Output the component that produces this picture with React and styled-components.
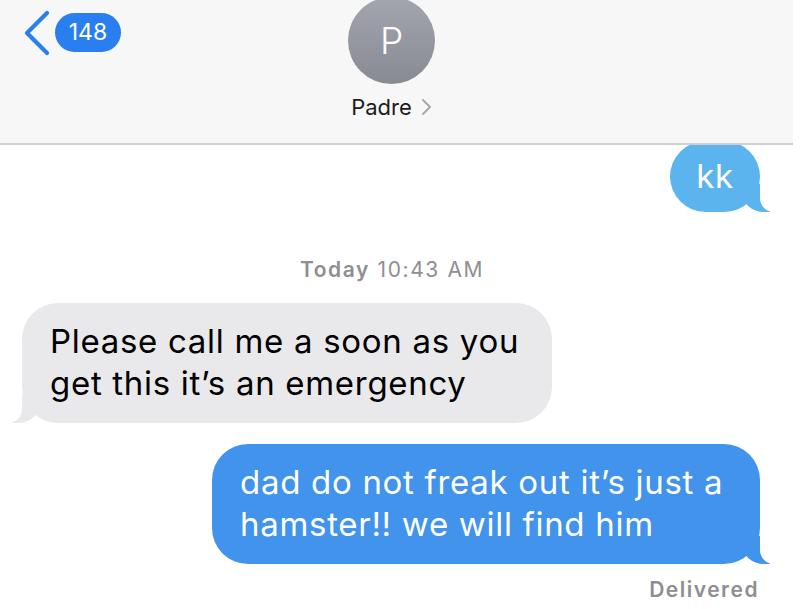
import React from "react";
import styled, { createGlobalStyle } from "styled-components";

const GlobalStyle = createGlobalStyle`
  html, body {
    margin: 0;
    padding: 0;
    background: #ffffff;
  }
  body {
    width: 800px;
    height: 609px;
    overflow: hidden;
    font-family: Inter, "Liberation Sans", Arial, sans-serif;
    -webkit-font-smoothing: antialiased;
  }
`;

const Screen = styled.div`
  width: 800px;
  height: 609px;
  display: flex;
  flex-direction: column;
  background: #ffffff;
`;

const Header = styled.header`
  position: relative;
  z-index: 2;
  width: 793px;
  height: 145px;
  box-sizing: border-box;
  background: #f7f7f7;
  border-bottom: 2px solid #cfcfcf;
  display: grid;
  grid-template-columns: 1fr auto 1fr;
`;

const Back = styled.div`
  display: flex;
  align-items: flex-start;
  gap: 4px;
  padding: 10px 0 0 23px;
`;

const Badge = styled.span`
  height: 39px;
  min-width: 66px;
  margin-top: 3px;
  box-sizing: border-box;
  padding: 0 10px;
  border-radius: 20px;
  background: #2a7ff0;
  color: #ffffff;
  font-size: 23px;
  line-height: 39px;
  text-align: center;
`;

const Contact = styled.div`
  display: flex;
  flex-direction: column;
  align-items: center;
  padding-right: 10px;
`;

const Avatar = styled.div`
  width: 87px;
  height: 87px;
  margin-top: -3px;
  border-radius: 50%;
  background: linear-gradient(180deg, #a3a6ae 0%, #878a93 100%);
  color: #ffffff;
  font-size: 37px;
  font-weight: 300;
  display: flex;
  align-items: center;
  justify-content: center;
`;

const NameRow = styled.div`
  margin-top: 10px;
  display: flex;
  align-items: center;
  gap: 9px;
  color: #1c1c1c;
  font-size: 22px;
`;

const Thread = styled.main`
  display: flex;
  flex-direction: column;
`;

const Row = styled.div`
  display: flex;
  justify-content: ${(p) => (p.$mine ? "flex-end" : "flex-start")};
  padding: ${(p) => (p.$mine ? "0 40px 0 0" : "0 0 0 22px")};
  margin-top: ${(p) => p.$top || 0}px;
`;

const Bubble = styled.div`
  position: relative;
  box-sizing: border-box;
  width: ${(p) => p.$width}px;
  padding: ${(p) => p.$pad || "17px 28px 19px"};
  border-radius: 36px;
  background: ${(p) => p.$color};
  color: ${(p) => (p.$mine ? "#ffffff" : "#000000")};
  font-size: 33px;
  letter-spacing: 0.7px;
  line-height: 42px;
  white-space: nowrap;
  text-align: ${(p) => p.$align || "left"};

  &::before {
    content: "";
    position: absolute;
    bottom: 0;
    ${(p) => (p.$mine ? "right: -10px;" : "left: -10px;")}
    width: 28px;
    height: 28px;
    background: ${(p) => p.$color};
    ${(p) =>
      p.$mine
        ? "border-bottom-left-radius: 22px 20px;"
        : "border-bottom-right-radius: 22px 20px;"}
  }

  &::after {
    content: "";
    position: absolute;
    bottom: 0;
    ${(p) => (p.$mine ? "right: -36px;" : "left: -36px;")}
    width: 36px;
    height: 28px;
    background: #ffffff;
    ${(p) =>
      p.$mine
        ? "border-bottom-left-radius: 14px;"
        : "border-bottom-right-radius: 14px;"}
  }
`;

const Stamp = styled.div`
  margin-top: 45px;
  padding-right: 16px;
  text-align: center;
  color: #8e8e93;
  font-size: 21px;
  letter-spacing: 1.6px;
  line-height: 26px;

  b {
    font-weight: 600;
  }
`;

const Status = styled.div`
  margin-top: 13px;
  padding-right: 41px;
  text-align: right;
  color: #8e8e93;
  font-size: 21px;
  font-weight: 600;
  letter-spacing: 1.5px;
  line-height: 26px;
`;

function Chevron() {
  return (
    <svg width="28" height="46" viewBox="0 0 28 46">
      <polyline
        points="24,3 4,23 24,43"
        fill="none"
        stroke="#2a7ff0"
        strokeWidth="4.2"
        strokeLinecap="round"
        strokeLinejoin="round"
      />
    </svg>
  );
}

function SmallChevron() {
  return (
    <svg width="11" height="18" viewBox="0 0 11 18">
      <polyline
        points="2,2 9,9 2,16"
        fill="none"
        stroke="#a5a5a9"
        strokeWidth="1.8"
        strokeLinecap="round"
        strokeLinejoin="round"
      />
    </svg>
  );
}

export default function App() {
  return (
    <Screen>
      <GlobalStyle />
      <Header>
        <Back>
          <Chevron />
          <Badge>148</Badge>
        </Back>
        <Contact>
          <Avatar>P</Avatar>
          <NameRow>
            Padre <SmallChevron />
          </NameRow>
        </Contact>
        <div />
      </Header>

      <Thread>
        <Row $mine $top={-4}>
          <Bubble $mine $width={90} $color="#5cb4ef" $align="center" $pad="14px 0 15px">
            kk
          </Bubble>
        </Row>

        <Stamp>
          <b>Today</b> 10:43 AM
        </Stamp>

        <Row $top={20}>
          <Bubble $width={530} $color="#e9e9eb">
            Please call me a soon as you
            <br />
            get this it’s an emergency
          </Bubble>
        </Row>

        <Row $mine $top={21}>
          <Bubble $mine $width={548} $color="#4193eb">
            dad do not freak out it’s just a
            <br />
            hamster!! we will find him
          </Bubble>
        </Row>

        <Status>Delivered</Status>
      </Thread>
    </Screen>
  );
}
